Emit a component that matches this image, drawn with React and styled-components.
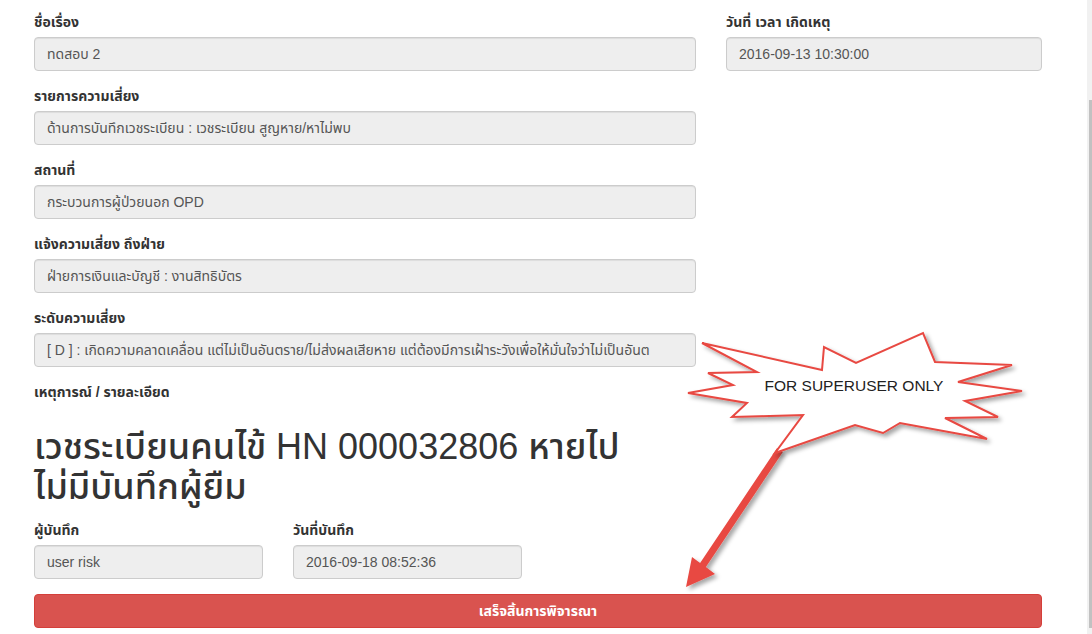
import React from 'react'
import styled, { createGlobalStyle } from 'styled-components'

const GlobalStyle = createGlobalStyle`
  html, body {
    margin: 0;
    padding: 0;
    background: #fff;
  }
  body {
    font-family: "Liberation Sans", "Noto Sans Thai", "DejaVu Sans", sans-serif;
    font-size: 14px;
    line-height: 1.42857;
    color: #333;
    overflow: hidden;
  }
`

const topFields = [
  { label: 'ชื่อเรื่อง', value: 'ทดสอบ 2' },
  { label: 'รายการความเสี่ยง', value: 'ด้านการบันทึกเวชระเบียน : เวชระเบียน สูญหาย/หาไม่พบ' },
  { label: 'สถานที่', value: 'กระบวนการผู้ป่วยนอก OPD' },
  { label: 'แจ้งความเสี่ยง ถึงฝ่าย', value: 'ฝ่ายการเงินและบัญชี : งานสิทธิบัตร' },
  {
    label: 'ระดับความเสี่ยง',
    value:
      '[ D ] : เกิดความคลาดเคลื่อน แต่ไม่เป็นอันตราย/ไม่ส่งผลเสียหาย แต่ต้องมีการเฝ้าระวังเพื่อให้มั่นใจว่าไม่เป็นอันต',
  },
]

const starPoints = [
  [702, 343], [822, 370], [824, 347], [856, 363], [923, 333], [935, 362],
  [1012, 365], [958, 382], [1022, 391], [965, 401], [998, 417], [945, 418],
  [987, 439], [900, 423], [883, 433], [855, 425], [775, 453], [803, 415],
  [732, 417], [747, 403], [688, 393], [733, 385], [708, 373], [757, 372],
]
  .map((p) => p.join(','))
  .join(' ')

function Field({ label, value }) {
  return (
    <FormGroup>
      <Label>{label}</Label>
      <Input>{value}</Input>
    </FormGroup>
  )
}

function Annotation() {
  return (
    <Overlay width="1092" height="634" viewBox="0 0 1092 634">
      <defs>
        <filter id="shadow" x="-10%" y="-10%" width="130%" height="130%">
          <feDropShadow dx="3" dy="3" stdDeviation="2" floodColor="#000" floodOpacity="0.35" />
        </filter>
      </defs>
      <polygon
        points="777.1,448 700.1,563 692,557 686,587 715,574 705.9,567 782.9,451.9"
        fill="#e84a43"
        filter="url(#shadow)"
      />
      <polygon
        points={starPoints}
        fill="#fff"
        stroke="#e84a43"
        strokeWidth="2"
        strokeLinejoin="miter"
        filter="url(#shadow)"
      />
      <StarText x="854" y="391" textAnchor="middle">
        FOR SUPERUSER ONLY
      </StarText>
    </Overlay>
  )
}

export default function App() {
  return (
    <>
      <GlobalStyle />
      <Page>
        <Main>
          <TopRow>
            <Column>
              {topFields.map((f) => (
                <Field key={f.label} label={f.label} value={f.value} />
              ))}
              <Label>เหตุการณ์ / รายละเอียด</Label>
              <Heading>
                เวชระเบียนคนไข้ HN 000032806 หายไป
                <br />
                ไม่มีบันทึกผู้ยืม
              </Heading>
            </Column>
            <Column>
              <Field label="วันที่ เวลา เกิดเหตุ" value="2016-09-13 10:30:00" />
            </Column>
          </TopRow>
          <BottomRow>
            <Field label="ผู้บันทึก" value="user risk" />
            <Field label="วันที่บันทึก" value="2016-09-18 08:52:36" />
          </BottomRow>
          <SubmitButton>เสร็จสิ้นการพิจารณา</SubmitButton>
        </Main>
        <Scrollbar>
          <Thumb />
        </Scrollbar>
        <Annotation />
      </Page>
    </>
  )
}

const Page = styled.div`
  position: relative;
  display: flex;
  width: 1092px;
  height: 634px;
  overflow: hidden;
`

const Main = styled.main`
  flex: 1;
  padding: 12px 0 0 34px;
  box-sizing: border-box;
`

const TopRow = styled.div`
  display: grid;
  grid-template-columns: 662px 316px;
  column-gap: 30px;
`

const Column = styled.div`
  display: flex;
  flex-direction: column;
  min-width: 0;
`

const BottomRow = styled.div`
  display: grid;
  grid-template-columns: 229px 229px;
  column-gap: 30px;
`

const FormGroup = styled.div`
  margin-bottom: 15px;
  min-width: 0;
`

const Label = styled.label`
  display: block;
  font-weight: 700;
  font-size: 14px;
  line-height: 20px;
  height: 20px;
  margin-bottom: 5px;
  color: #333;
`

const Input = styled.div`
  height: 34px;
  box-sizing: border-box;
  padding: 6px 12px;
  font-size: 14px;
  line-height: 20px;
  color: #555;
  background: #eee;
  border: 1px solid #ccc;
  border-radius: 4px;
  box-shadow: inset 0 1px 1px rgba(0, 0, 0, 0.075);
  white-space: nowrap;
  overflow: hidden;
`

const Heading = styled.h1`
  margin: 20px 0 14px;
  font-size: 36px;
  font-weight: 500;
  line-height: 39.6px;
  color: #333;
  white-space: nowrap;
`

const SubmitButton = styled.button`
  display: block;
  width: 1008px;
  height: 34px;
  padding: 6px 12px;
  font-family: inherit;
  font-size: 14px;
  font-weight: 700;
  line-height: 20px;
  color: #fff;
  background: #d9534f;
  border: 1px solid #d43f3a;
  border-radius: 4px;
`

const Scrollbar = styled.div`
  width: 5px;
  background: #f1f1f1;
  padding-top: 100px;
  padding-bottom: 6px;
  box-sizing: border-box;
  display: flex;
`

const Thumb = styled.div`
  flex: 1;
  margin-left: 2px;
  background: #c1c1c1;
`

const Overlay = styled.svg`
  position: absolute;
  left: 0;
  top: 0;
  pointer-events: none;
`

const StarText = styled.text`
  font-family: "Liberation Sans", Arial, sans-serif;
  font-size: 15.5px;
  fill: #222;
`
